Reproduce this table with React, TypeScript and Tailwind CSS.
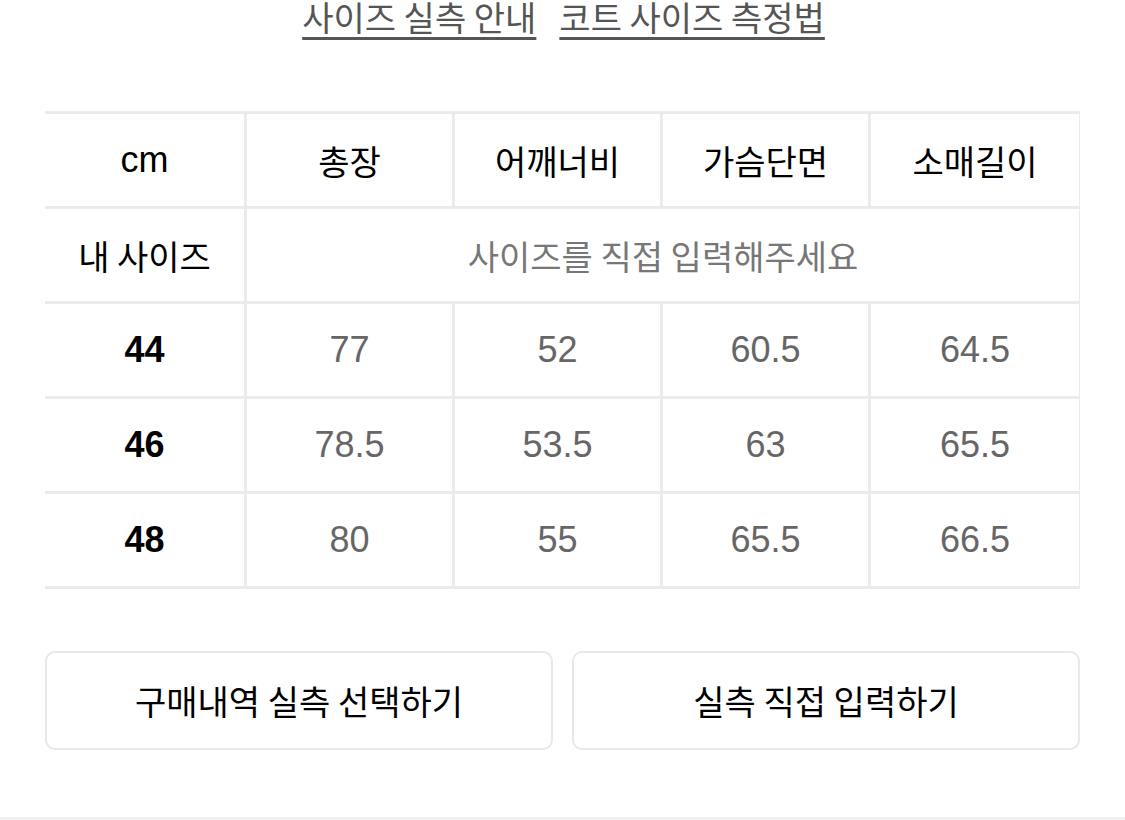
const font = { fontFamily: '"Noto Sans CJK KR", "Noto Sans", sans-serif' }

const headers = ['총장', '어깨너비', '가슴단면', '소매길이']

const rows = [
  { size: '44', values: ['77', '52', '60.5', '64.5'] },
  { size: '46', values: ['78.5', '53.5', '63', '65.5'] },
  { size: '48', values: ['80', '55', '65.5', '66.5'] },
]

function Cell({ children, className = '' }: { children: React.ReactNode; className?: string }) {
  return (
    <div className={`bg-white h-[92px] flex items-center justify-center ${className}`}>
      {children}
    </div>
  )
}

export default function App() {
  return (
    <div
      className="w-[1125px] h-[820px] bg-white overflow-hidden flex flex-col"
      style={font}
    >
      {/* 상단 링크 */}
      <div className="flex justify-center gap-[23px] mt-[-8px] pl-[2px] text-[34px] leading-[50px] text-[#555555]">
        <span className="underline decoration-[3px] underline-offset-[6px]">사이즈 실측 안내</span>
        <span className="underline decoration-[3px] underline-offset-[6px]">코트 사이즈 측정법</span>
      </div>

      {/* 사이즈 표 */}
      <div className="mx-[45px] mt-[69px] border-y-[3px] border-[#ebebeb]">
        <div className="grid grid-cols-[199px_205px_205px_205px_208px] gap-[3px] bg-[#ebebeb]">
          <Cell className="text-[36px] text-black font-['Liberation_Sans',sans-serif]">cm</Cell>
          {headers.map((h) => (
            <Cell key={h} className="text-[34px] text-black">
              {h}
            </Cell>
          ))}

          <Cell className="text-[34px] text-black">내 사이즈</Cell>
          <Cell className="col-span-4 text-[34px] text-[#777777]">사이즈를 직접 입력해주세요</Cell>

          {rows.map((r) => (
            <div key={r.size} className="contents">
              <Cell className="text-[36px] text-black font-bold font-['Liberation_Sans',sans-serif]">
                {r.size}
              </Cell>
              {r.values.map((v, i) => (
                <Cell key={i} className="text-[36px] text-[#666666] font-['Liberation_Sans',sans-serif]">
                  {v}
                </Cell>
              ))}
            </div>
          ))}
        </div>
      </div>

      {/* 버튼 */}
      <div className="mx-[45px] mt-[62px] grid grid-cols-2 gap-[19px]">
        <button className="h-[99px] rounded-[10px] border-2 border-[#e8e8e8] bg-white text-[34px] text-black">
          구매내역 실측 선택하기
        </button>
        <button className="h-[99px] rounded-[10px] border-2 border-[#e8e8e8] bg-white text-[34px] text-black">
          실측 직접 입력하기
        </button>
      </div>

      <div className="flex-1" />
      <div className="h-[3px] bg-[#f0f0f0]" />
    </div>
  )
}
